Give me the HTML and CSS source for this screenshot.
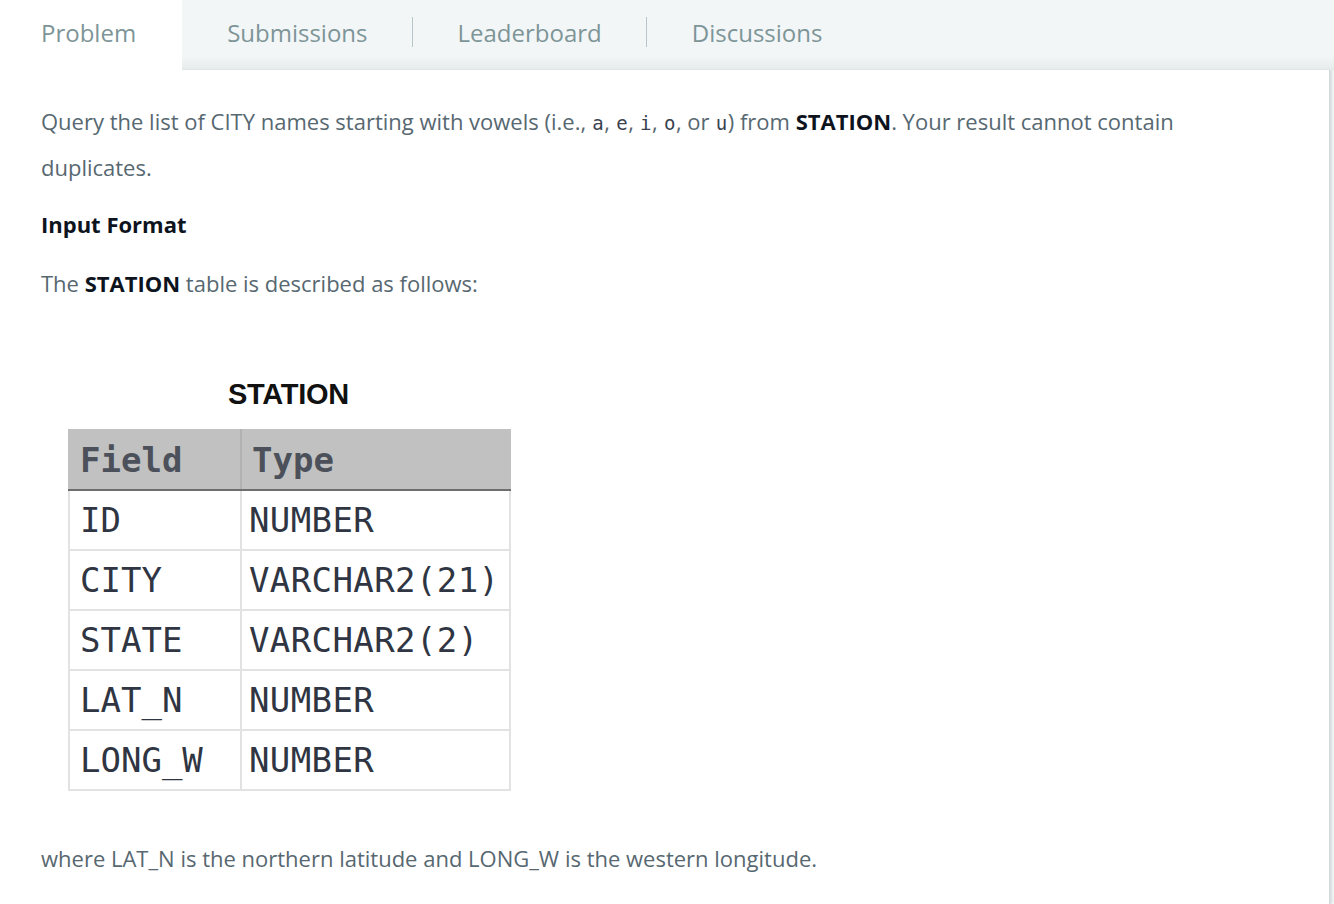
FILE: index.html
```html
<!DOCTYPE html>
<html>
<head>
<meta charset="utf-8">
<link rel="stylesheet" href="styles.css">
</head>
<body>
<div class="page">
  <nav class="tabs">
    <div class="tab active">Problem</div>
    <div class="tab sep">Submissions</div>
    <div class="tab sep">Leaderboard</div>
    <div class="tab">Discussions</div>
    <div class="tab-fill"></div>
  </nav>
  <main class="panel">
    <p class="text first">Query the list of CITY names starting with vowels (i.e., <code>a</code>, <code>e</code>, <code>i</code>, <code>o</code>, or <code>u</code>) from <strong>STATION</strong>. Your result cannot contain duplicates.</p>
    <h3 class="heading">Input Format</h3>
    <p class="text desc">The <strong>STATION</strong> table is described as follows:</p>
    <figure class="figure">
      <div class="fig-title">STATION</div>
      <table class="station">
        <thead>
          <tr><th class="c1">Field</th><th class="c2">Type</th></tr>
        </thead>
        <tbody>
          <tr><td>ID</td><td>NUMBER</td></tr>
          <tr><td>CITY</td><td>VARCHAR2(21)</td></tr>
          <tr><td>STATE</td><td>VARCHAR2(2)</td></tr>
          <tr><td>LAT_N</td><td>NUMBER</td></tr>
          <tr><td>LONG_W</td><td>NUMBER</td></tr>
        </tbody>
      </table>
    </figure>
    <p class="text last">where LAT_N is the northern latitude and LONG_W is the western longitude.</p>
  </main>
</div>
</body>
</html>
```

FILE: styles.css
```css
* { box-sizing: border-box; }
html, body { margin: 0; padding: 0; }
body {
  background: #ffffff;
  font-family: "Open Sans", "Noto Sans", sans-serif;
  width: 1334px;
  height: 904px;
  overflow: hidden;
}
.page {
  display: flex;
  flex-direction: column;
  height: 904px;
  background: #f3f6f7;
}
.tabs {
  display: flex;
  align-items: stretch;
  height: 70px;
  background: linear-gradient(to bottom, #f3f6f7 0px, #f3f6f7 56px, #e6ebec 70px);
}
.tab {
  display: flex;
  align-items: center;
  padding: 0 45px 6px 45px;
  font-size: 24px;
  color: #7d9597;
  position: relative;
}
.tab.active {
  background: #ffffff;
  padding-left: 41px;
  padding-right: 46px;
}
.tab.sep::after {
  content: "";
  position: absolute;
  right: 0;
  top: 17px;
  height: 30px;
  width: 1px;
  background: #b7c6c8;
}
.tab-fill { flex: 1; }
.panel {
  flex: 1;
  background: #ffffff;
  margin-right: 4px;
  padding: 0 41px;
  box-shadow: 2px 0 2px #d7dddd;
  border-right: 1px solid #d2d9da;
}
.text {
  margin: 0;
  font-size: 22px;
  line-height: 44px;
  color: #576871;
}
.text.first { padding-top: 29px; max-width: 1150px; }
.text strong { color: #0e141e; font-weight: 700; }
code {
  font-family: "DejaVu Sans Mono", monospace;
  font-size: 19px;
  color: #39424e;
  margin: 0 0.5px;
}
.heading {
  margin: 20px 0 0 0;
  font-size: 22px;
  line-height: 30px;
  font-weight: 700;
  color: #0e141e;
}
.text.desc { margin-top: 22px; }
.figure {
  margin: 71px 0 0 27px;
  width: 443px;
  display: flex;
  flex-direction: column;
}
.fig-title {
  font-family: "Liberation Sans", Arial, sans-serif;
  font-weight: 700;
  font-size: 29px;
  line-height: 36px;
  text-align: center;
  color: #111111;
  margin-left: -2px;
  letter-spacing: -0.3px;
}
.station {
  margin-top: 17px;
  border-collapse: collapse;
  width: 443px;
  font-family: "DejaVu Sans Mono", monospace;
  font-size: 34px;
  color: #2f3542;
}
.station th, .station td {
  height: 60px;
  padding: 0 0 0 10px;
  text-align: left;
  vertical-align: middle;
  border: 2px solid #e2e2e2;
  font-weight: 400;
}
.station th {
  background: #c0c1c0;
  color: #4c505a;
  font-weight: 700;
  border-color: #c0c1c0;
  border-bottom: 2px solid #6e6e6e;
}
.station .c1 { width: 172px; border-right: 2px solid #b2b2b2; }
.station td:last-child { padding-left: 7px; letter-spacing: 0.4px; }
.text.last { margin-top: 45px; }
```
